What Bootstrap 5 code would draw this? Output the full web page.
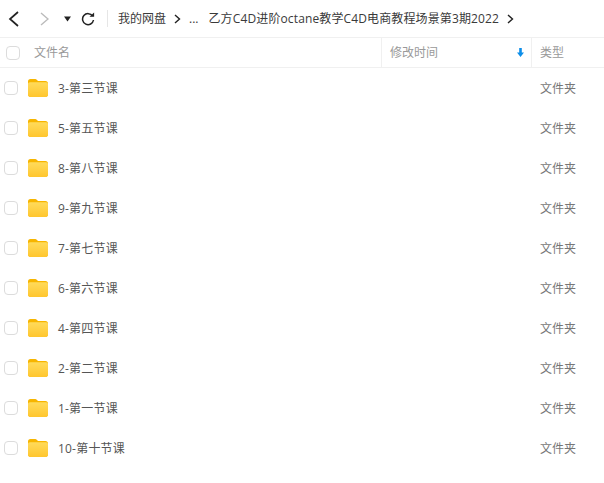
<!DOCTYPE html>
<html lang="zh">
<head>
  <meta charset="UTF-8" />
  <title>文件列表</title>
  <link href="https://cdn.jsdelivr.net/npm/bootstrap@5.3.0/dist/css/bootstrap.min.css" rel="stylesheet" />
  <style>
    html, body { height: 100%; }
    body {
      background: #fff;
      color: #424e67;
      font-family: "Open Sans", "Noto Sans CJK SC", sans-serif;
      font-size: 12px;
      overflow: hidden;
    }
    .top-bar { height: 37px; padding-left: 8px; color: #222; }
    .nav-btn { display: block; flex: none; }
    .nav-fwd { margin-left: 21px; }
    .nav-drop { margin-left: 15px; }
    .nav-reload { margin-left: 10px; }
    .bar-sep { width: 1px; height: 17px; background: #e6e6e6; margin: 0 10px 0 12px; }
    .crumb { white-space: nowrap; font-size: 12px; color: #3a3a3a; }
    .crumb-long { letter-spacing: .13px; margin-left: 10px; }
    .crumb-arrow { flex: none; }
    .head-row {
      height: 31px;
      border-top: 1px solid #f0f0f0;
      border-bottom: 1px solid #f0f0f0;
      color: #999;
    }
    .tick {
      width: 14px; height: 14px;
      border: 1px solid #dcdcdc;
      border-radius: 4px;
      flex: none;
      background: #fff;
    }
    .col-name { width: 381px; flex: none; }
    .head-name { padding-left: 6px; gap: 14px; }
    .col-time { width: 150px; flex: none; border-left: 1px solid #f0f0f0; height: 100%; padding: 0 7px 0 8px; }
    .col-kind { flex: 1; border-left: 1px solid #f0f0f0; height: 100%; padding-left: 8px; }
    .file-row { height: 40px; color: #555; }
    .row-name { padding-left: 4px; }
    .row-icon { margin-left: 10px; }
    .file-name { margin-left: 10px; padding-top: 1px; letter-spacing: .2px; }
    .file-kind { color: #777; margin-left: 150px; padding-left: 9px; padding-top: 1px; }
  </style>
</head>
<body>
  <div class="top-bar d-flex align-items-center">
    <svg class="nav-btn" width="11" height="16" viewBox="0 0 11 16"><path d="M10 1 2 8l8 7" fill="none" stroke="#222" stroke-width="1.7"/></svg>
    <svg class="nav-btn nav-fwd" width="9" height="14" viewBox="0 0 9 14"><path d="M1 1l7 6-7 6" fill="none" stroke="#bbb" stroke-width="1.4"/></svg>
    <svg class="nav-btn nav-drop" width="7" height="6" viewBox="0 0 7 6"><path d="M0 .5h7L3.500 5.500z" fill="#222"/></svg>
    <svg class="nav-btn nav-reload" width="14" height="14" viewBox="0 0 14 14"><path d="M11.600 4A5.500 5.500 0 1 0 12.500 8" fill="none" stroke="#222" stroke-width="1.500"/><path d="M8.500 4.800h4.600V.5z" fill="#222"/></svg>
    <span class="bar-sep"></span>
    <span class="crumb">我的网盘</span>
    <svg class="crumb-arrow ms-2" width="7" height="10" viewBox="0 0 7 10"><path d="M1 1l4.500 4L1 9" fill="none" stroke="#222" stroke-width="1.400"/></svg>
    <span class="crumb ms-2">...</span>
    <span class="crumb crumb-long">乙方C4D进阶octane教学C4D电商教程场景第3期2022</span>
    <svg class="crumb-arrow ms-2" width="7" height="10" viewBox="0 0 7 10"><path d="M1 1l4.500 4L1 9" fill="none" stroke="#222" stroke-width="1.400"/></svg>
  </div>

  <div class="head-row d-flex align-items-center">
    <div class="col-name d-flex align-items-center head-name">
      <span class="tick"></span><span>文件名</span>
    </div>
    <div class="col-time d-flex align-items-center justify-content-between">
      <span>修改时间</span>
      <svg width="7" height="9" viewBox="0 0 7 9"><path d="M2.200 0h2.600v4.500H7L3.500 9 0 4.500h2.200z" fill="#0d8ee9"/></svg>
    </div>
    <div class="col-kind d-flex align-items-center">类型</div>
  </div>

  <div id="rows"></div>

  <script>
    const names = ['3-第三节课', '5-第五节课', '8-第八节课', '9-第九节课', '7-第七节课', '6-第六节课', '4-第四节课', '2-第二节课', '1-第一节课', '10-第十节课'];
    const folder = '<svg width="20" height="18" viewBox="0 0 20 18"><defs><linearGradient id="fg" x1="0" y1="0" x2="0" y2="1"><stop offset="0" stop-color="#ffdb5c"/><stop offset="1" stop-color="#ffc62e"/></linearGradient></defs><path d="M0 2.500C0 1 .8 0 2.500 0h4.300c1 0 1.500.3 2.200 1l1 1h7.500C19 2 20 3 20 4.500v11c0 1.500-1 2.500-2.500 2.500h-15C1 18 0 17 0 15.500z" fill="#f7b500"/><path d="M0 5c0-1 .8-1.800 2-1.800h16c1.200 0 2 .8 2 1.800v10.500c0 1.500-1 2.500-2.500 2.500h-15C1 18 0 17 0 15.500z" fill="url(#fg)"/></svg>';
    document.getElementById('rows').innerHTML = names.map(n =>
      `<div class="file-row d-flex align-items-center"><div class="col-name d-flex align-items-center row-name"><span class="tick"></span><span class="row-icon d-flex">${folder}</span><span class="file-name">${n}</span></div><div class="file-kind">文件夹</div></div>`
    ).join('');
  </script>
  <script src="https://cdn.jsdelivr.net/npm/bootstrap@5.3.0/dist/js/bootstrap.bundle.min.js"></script>
</body>
</html>
